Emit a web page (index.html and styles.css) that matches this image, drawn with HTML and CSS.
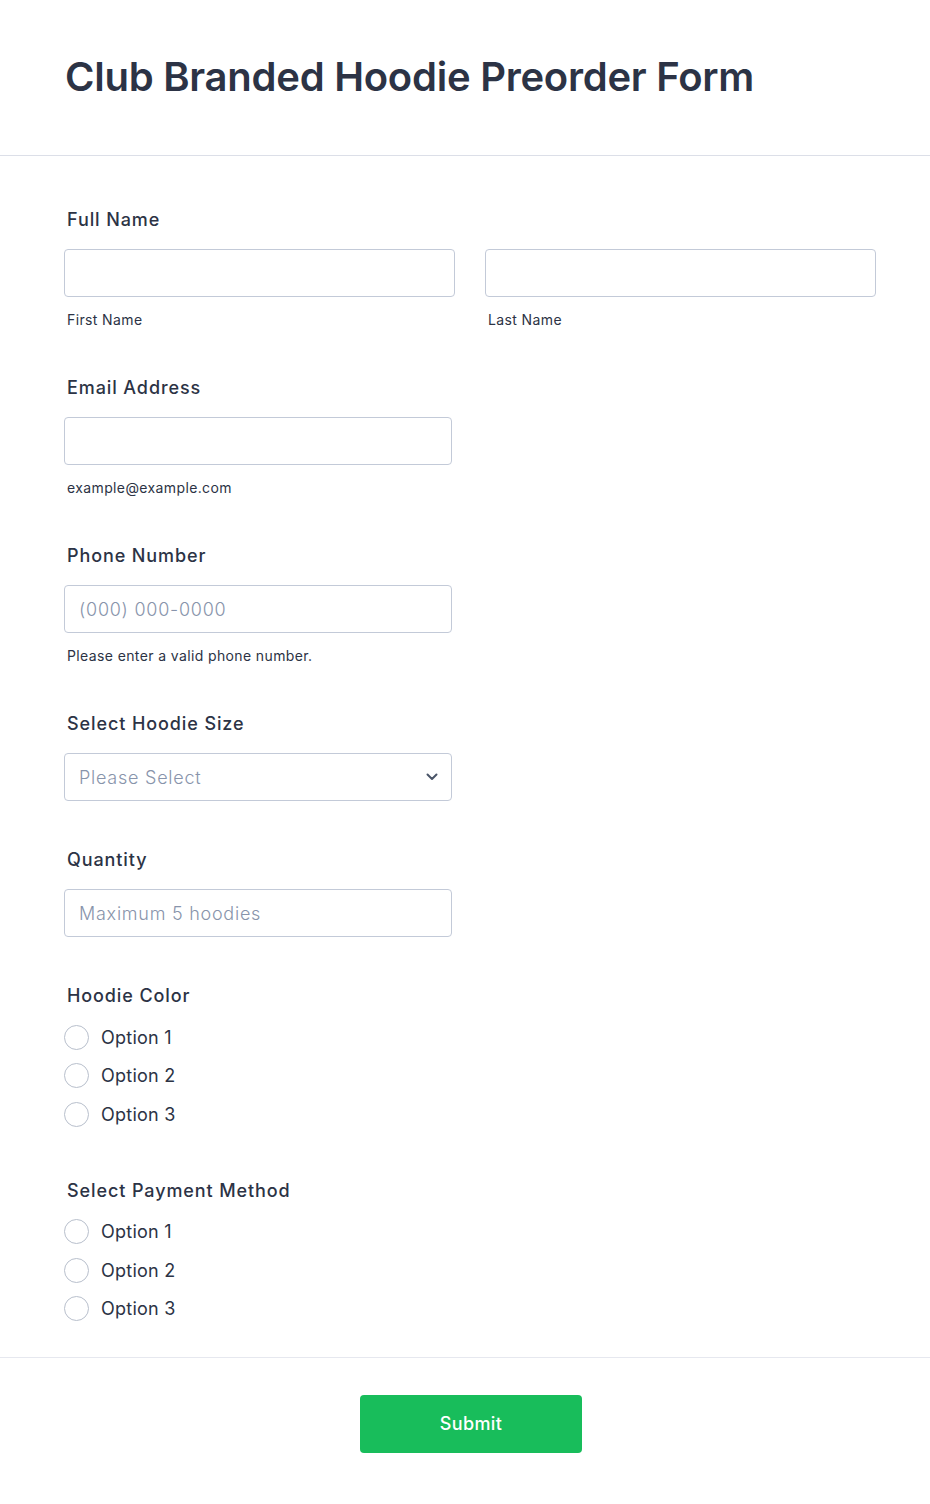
FILE: index.html
```html
<!DOCTYPE html>
<html lang="en">
<head>
<meta charset="utf-8">
<title>Club Branded Hoodie Preorder Form</title>
<link rel="stylesheet" href="styles.css">
</head>
<body>
<header class="header">
  <h1 class="title">Club Branded Hoodie Preorder Form</h1>
</header>
<main class="form">
  <div class="field">
    <div class="label">Full Name</div>
    <div class="two-col">
      <div>
        <div class="input"></div>
        <div class="sublabel">First Name</div>
      </div>
      <div>
        <div class="input"></div>
        <div class="sublabel">Last Name</div>
      </div>
    </div>
  </div>
  <div class="field">
    <div class="label">Email Address</div>
    <div class="input narrow"></div>
    <div class="sublabel">example@example.com</div>
  </div>
  <div class="field">
    <div class="label">Phone Number</div>
    <div class="input narrow"><span class="placeholder">(000) 000-0000</span></div>
    <div class="sublabel">Please enter a valid phone number.</div>
  </div>
  <div class="field no-sub">
    <div class="label">Select Hoodie Size</div>
    <div class="input narrow select">
      <span class="placeholder">Please Select</span>
      <svg class="chevron" width="12" height="8" viewBox="0 0 12 8"><path d="M1.5 1.5 L6 6 L10.5 1.5" fill="none" stroke="#4a5568" stroke-width="2" stroke-linecap="round" stroke-linejoin="round"/></svg>
    </div>
  </div>
  <div class="field no-sub">
    <div class="label">Quantity</div>
    <div class="input narrow"><span class="placeholder">Maximum 5 hoodies</span></div>
  </div>
  <div class="field radio-field">
    <div class="label">Hoodie Color</div>
    <div class="radios">
      <div class="radio"><span class="circle"></span><span>Option 1</span></div>
      <div class="radio"><span class="circle"></span><span>Option 2</span></div>
      <div class="radio"><span class="circle"></span><span>Option 3</span></div>
    </div>
  </div>
  <div class="field radio-field last">
    <div class="label">Select Payment Method</div>
    <div class="radios">
      <div class="radio"><span class="circle"></span><span>Option 1</span></div>
      <div class="radio"><span class="circle"></span><span>Option 2</span></div>
      <div class="radio"><span class="circle"></span><span>Option 3</span></div>
    </div>
  </div>
</main>
<footer class="footer">
  <button class="submit" type="button">Submit</button>
</footer>
</body>
</html>
```
FILE: styles.css
```css
* { box-sizing: border-box; }
html, body { margin: 0; padding: 0; background: #ffffff; }
body {
  font-family: Inter, "Noto Sans", "Liberation Sans", sans-serif;
  color: #2c3345;
  width: 930px;
}
.header {
  padding: 48px 64px 49px 65px;
  border-bottom: 1px solid #dcdfe8;
}
.title {
  margin: 0;
  font-size: 40px;
  line-height: 58px;
  font-weight: 600;
  color: #2c3345;
  letter-spacing: -0.25px;
}
.form {
  padding: 50px 54px 34px 64px;
  border-bottom: 1px solid #e6e8ef;
}
.field { margin-bottom: 44px; }
.field.no-sub { margin-bottom: 45px; }
.field.radio-field { margin-bottom: 48.5px; }
.field.last { margin-bottom: 0; }
.label {
  font-size: 18px;
  line-height: 28px;
  font-weight: 500;
  letter-spacing: 0.9px;
  margin-left: 3px;
  margin-bottom: 15px;
}
.two-col {
  display: grid;
  grid-template-columns: 391px 391px;
  column-gap: 30px;
}
.input {
  height: 48px;
  border: 1px solid #c3cad8;
  border-radius: 4px;
  background: #fff;
  display: flex;
  align-items: center;
  padding: 0 14px;
}
.input.narrow { width: 388px; }
.placeholder {
  font-size: 18px;
  color: #8894ab;
  font-weight: 300;
  letter-spacing: 0.75px;
}
.select { justify-content: space-between; padding-right: 13px; }
.chevron { display: block; }
.sublabel {
  margin-top: 13px;
  margin-left: 3px;
  font-size: 14px;
  line-height: 20px;
  letter-spacing: 0.38px;
  color: #2c3345;
}
.radios {
  display: flex;
  flex-direction: column;
  gap: 10.5px;
  margin-top: -2px;
}
.radio {
  display: flex;
  align-items: center;
  height: 28px;
  font-size: 18px;
  letter-spacing: 0.25px;
  gap: 12px;
  color: #2c3345;
}
.circle {
  width: 25px;
  height: 25px;
  border: 1px solid #b8bfcc;
  border-radius: 50%;
  background: #fff;
  flex: none;
}
.footer {
  padding: 37px 52px 50px 64px;
  display: flex;
  justify-content: center;
}
.submit {
  width: 222px;
  height: 58px;
  border: none;
  border-radius: 4px;
  background: #18bd5b;
  color: #ffffff;
  font-family: Inter, "Noto Sans", "Liberation Sans", sans-serif;
  font-size: 18px;
  font-weight: 500;
  letter-spacing: 0.4px;
}
```
